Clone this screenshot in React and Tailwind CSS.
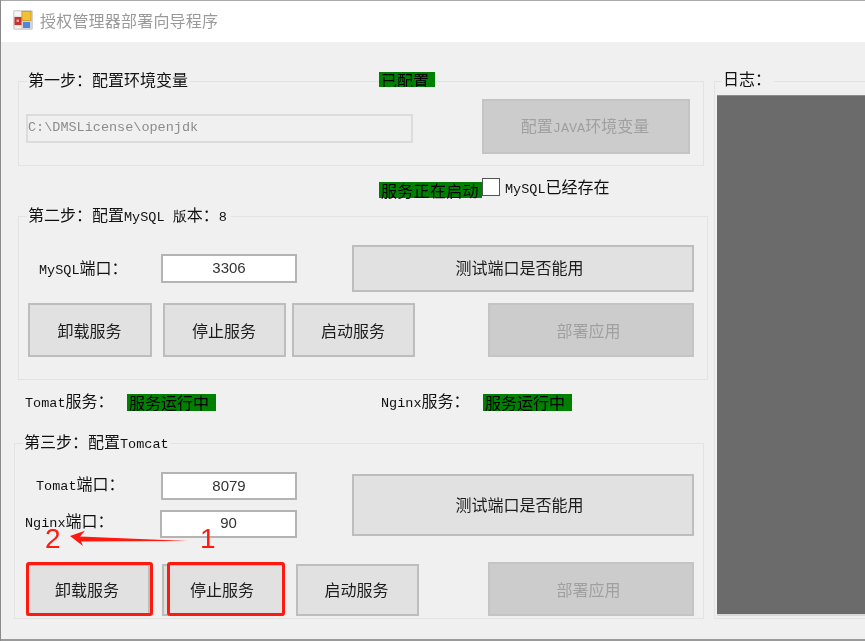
const cjk = "font-['Noto_Sans_CJK_SC',sans-serif]";

function L({ children }) {
  return <span className="font-['Liberation_Mono',monospace] text-[13.5px]">{children}</span>;
}

function Group({ className, legend, legendClass, children }) {
  return (
    <div className={`relative border border-[#e3e3e3] ${className}`}>
      <div className={`absolute bg-[#f0f0f0] h-[18px] text-[16px] leading-[18px] text-[#111] whitespace-pre ${legendClass}`}>
        <span>{legend}</span>
      </div>
      {children}
    </div>
  );
}

function Btn({ className, disabled, children }) {
  return (
    <div
      className={`flex items-center justify-center text-[16px] border-2 ${
        disabled
          ? "bg-[#cccccc] border-[#c4c4c4] text-[#a0a0a0]"
          : "bg-[#e1e1e1] border-[#bdbdbd] text-[#1c1c1c]"
      } ${className}`}
    >
      <span>{children}</span>
    </div>
  );
}

function Port({ className, children }) {
  return (
    <div className={`flex items-center justify-center bg-white border-2 border-[#b4b4b4] font-['Liberation_Sans',sans-serif] text-[15px] text-[#333] ${className}`}>
      {children}
    </div>
  );
}

function Badge({ className, children }) {
  return (
    <div className={`bg-[#008000] text-black text-[16px] leading-[16px] pl-[2px] whitespace-nowrap ${className}`}>
      {children}
    </div>
  );
}

function AppIcon() {
  return (
    <svg width="20" height="20" viewBox="0 0 20 20" className="shrink-0">
      <rect x="0" y="0" width="20" height="20" rx="2" fill="#d4d4d4" />
      <rect x="1.5" y="1.5" width="7" height="5" fill="#f6f6f6" />
      <rect x="9" y="1.5" width="9" height="9" fill="#f3c230" stroke="#c9962a" strokeWidth="0.8" />
      <rect x="1.5" y="7" width="7" height="8" fill="#c8322c" />
      <rect x="3.5" y="9.5" width="2.5" height="2.5" fill="#f0a0a0" />
      <rect x="10" y="12" width="7" height="6" fill="#4f86e0" />
      <rect x="2" y="15.5" width="6" height="3" fill="#f0f0f0" />
    </svg>
  );
}

function Annotations() {
  return (
    <>
      <div className="absolute left-[25px] top-[562px] w-[127px] h-[54px] border-[3px] border-[#ff1a10] rounded-[3px]" />
      <div className="absolute left-[166px] top-[562px] w-[118px] h-[54px] border-[3px] border-[#ff1a10] rounded-[3px]" />
      <svg className="absolute left-[59px] top-[524px]" width="140" height="30" viewBox="0 0 140 30">
        <path d="M128 17 L20 12.5 L25 6.7 L10 12 L23 22 L21 17.5 Z" fill="#ff1a10" />
      </svg>
      <div className="absolute left-[44px] top-[523px] text-[28px] leading-[32px] font-['Liberation_Sans',sans-serif] text-[#ff1a10]">2</div>
      <div className="absolute left-[199px] top-[523px] text-[28px] leading-[32px] font-['Liberation_Sans',sans-serif] text-[#ff1a10]">1</div>
    </>
  );
}

export default function App() {
  return (
    <div className={`relative w-[865px] h-[641px] overflow-hidden flex flex-col bg-[#f0f0f0] border-l border-[#8a8a8a] blur-[0.35px] ${cjk}`}>
      <div className="h-[1px] bg-[#aaaaaa] shrink-0" />
      <div className="h-[41px] bg-white shrink-0 flex items-center pl-[12px] gap-[7px] pb-[3px]">
        <AppIcon />
        <span className="text-[16px] tracking-[0.2px] text-[#9a9a9a]">授权管理器部署向导程序</span>
      </div>

      <div className="flex flex-1 pl-[13px] min-h-0">
        <div className="w-[694px] flex flex-col shrink-0">
          {/* step 1 */}
          <Group className="ml-[4px] mt-[39px] w-[686px] h-[85px] flex items-start pl-[7px]" legend="第一步：配置环境变量" legendClass="left-[8px] top-[-12px] px-[1px]">
            <Badge className="absolute left-[360px] top-[-10px] w-[56px] h-[15px] overflow-hidden">已配置</Badge>
            <div className="mt-[32px] w-[387px] h-[29px] border-2 border-[#dcdcdc] bg-[#f0f0f0] flex items-center text-[#8c8c8c]">
              <L>C:\DMSLicense\openjdk</L>
            </div>
            <Btn disabled className="ml-[69px] mt-[17px] w-[208px] h-[55px] pb-[1px] pr-[2px]">
              配置<L>JAVA</L>环境变量
            </Btn>
          </Group>

          {/* mysql exists row */}
          <div className="h-[50px] shrink-0 flex items-start pl-[365px]">
            <Badge className="mt-[16px] w-[103px] h-[16px] tracking-[0.3px]">服务正在启动</Badge>
            <div className="mt-[12px] w-[18px] h-[18px] bg-white border border-[#555555]" />
            <div className="mt-[10px] ml-[5px] text-[16px] leading-[20px] text-[#111]">
              <L>MySQL</L>已经存在
            </div>
          </div>

          {/* step 2 */}
          <Group className="ml-[4px] w-[690px] h-[164px] flex flex-col pt-[28px]" legend={<>第二步：配置<L>MySQL 版</L>本：<L>8</L></>} legendClass="left-[8px] top-[-12px] pr-[4px] pl-[1px]">
            <div className="flex items-center">
              <div className="ml-[20px] w-[122px] text-[16px] leading-[20px] text-[#111]"><L>MySQL</L>端口：</div>
              <Port className="w-[136px] h-[29px]">3306</Port>
              <Btn className="ml-[55px] w-[342px] h-[47px] pr-[7px] pb-[3px]">测试端口是否能用</Btn>
            </div>
            <div className="flex mt-[11px] pl-[9px]">
              <Btn className="w-[124px] h-[54px] pr-[1px]">卸载服务</Btn>
              <Btn className="ml-[11px] w-[123px] h-[54px] pr-[1px]">停止服务</Btn>
              <Btn className="ml-[6px] w-[123px] h-[54px] pr-[1px]">启动服务</Btn>
              <Btn disabled className="ml-[73px] w-[206px] h-[54px] pr-[5px]">部署应用</Btn>
            </div>
          </Group>

          {/* service status row */}
          <div className="h-[63px] shrink-0 flex items-start pt-[14px] pl-[11px] text-[16px] leading-[16px] text-[#111]">
            <div className="w-[102px] mt-[-2px]"><L>Tomat</L>服务：</div>
            <Badge className="w-[89px] h-[17px]">服务运行中</Badge>
            <div className="ml-[165px] w-[102px] mt-[-2px]"><L>Nginx</L>服务：</div>
            <Badge className="w-[89px] h-[17px]">服务运行中</Badge>
          </div>

          {/* step 3 */}
          <Group className="w-[690px] h-[176px] flex flex-col pt-[28px]" legend={<>第三步：配置<L>Tomcat</L></>} legendClass="left-[8px] top-[-12px] pr-[2px] pl-[1px]">
            <div className="flex items-start">
              <div className="w-[337px] flex flex-col">
                <div className="flex items-center">
                  <div className="ml-[21px] w-[125px] text-[16px] leading-[20px] text-[#111] pb-[2px]"><L>Tomat</L>端口：</div>
                  <Port className="w-[136px] h-[28px]">8079</Port>
                </div>
                <div className="flex items-center mt-[10px]">
                  <div className="ml-[10px] w-[135px] text-[16px] leading-[20px] text-[#111] pb-[4px]"><L>Nginx</L>端口：</div>
                  <Port className="w-[137px] h-[28px] pb-[2px]">90</Port>
                </div>
              </div>
              <Btn className="mt-[2px] w-[342px] h-[62px] pr-[7px] pb-[2px]">测试端口是否能用</Btn>
            </div>
            <div className="flex items-end mt-[24px] pl-[11px]">
              <Btn className="w-[124px] h-[52px] pr-[2px] pb-[2px]">卸载服务</Btn>
              <Btn className="ml-[12px] w-[122px] h-[52px] pr-[2px] pb-[2px]">停止服务</Btn>
              <Btn className="ml-[12px] w-[123px] h-[52px] pr-[2px] pb-[2px]">启动服务</Btn>
              <Btn disabled className="ml-[69px] w-[206px] h-[54px] pr-[5px]">部署应用</Btn>
            </div>
          </Group>
        </div>

        {/* log */}
        <Group className="ml-[6px] mt-[39px] flex-1 h-[538px] border-r-0 pt-[13px] pl-[2px]" legend="日志：" legendClass="left-[7px] top-[-13px] w-[52px] pl-[1px]">
          <div className="h-[521px] bg-[#6b6b6b] border-t border-t-[#8c8c8c] border-b-2 border-b-[#d8d8d8]" />
        </Group>
      </div>
      <div className="h-[2px] bg-[#9a9a9a] shrink-0" />

      <Annotations />
    </div>
  );
}
